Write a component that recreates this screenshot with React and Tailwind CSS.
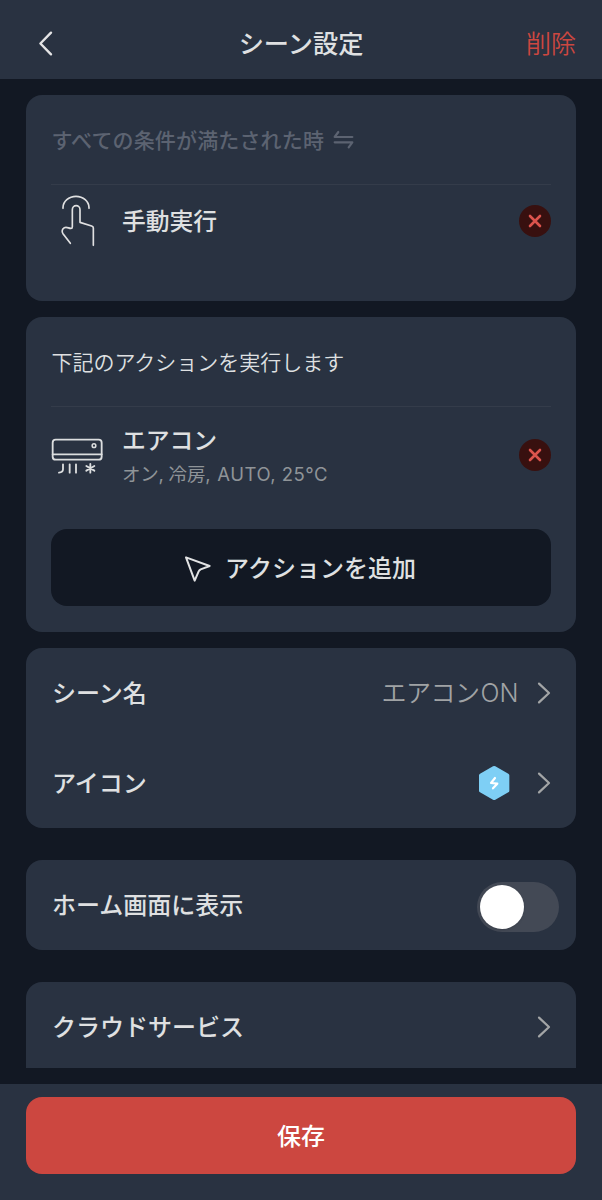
import React from 'react';

const BackIcon = () => (
  <svg width="20" height="30" viewBox="0 0 20 30" fill="none" stroke="#e4e4e5" strokeWidth="2.4" strokeLinecap="round" strokeLinejoin="round">
    <path d="M14 3.7 3.4 14.5 14 25.3" />
  </svg>
);

const ChevronIcon = () => (
  <svg width="14" height="22" viewBox="0 0 14 22" fill="none" stroke="#a3a5a6" strokeWidth="2.2" strokeLinecap="round" strokeLinejoin="round">
    <path d="M2 1.6 12 11 2 20.4" />
  </svg>
);

const SwapIcon = () => (
  <svg width="21" height="19" viewBox="0 0 63 57" fill="none" stroke="#5c6371" strokeWidth="6.5" strokeLinecap="round" strokeLinejoin="round">
    <path d="M58 21H5L16 6" />
    <path d="M5 37h53L47 52" />
  </svg>
);

const TapIcon = () => (
  <svg width="52" height="52" viewBox="93 315 156 156" fill="none" stroke="#e0e0e1" strokeWidth="5" strokeLinecap="round" strokeLinejoin="round">
    <path d="M129 355v-2a39 34 0 0 1 78 0v2" />
    <path d="M151 460 129 431c-5-7-2-15 4-18 8-4 14 3 20 2 3 0 4-2 4-5v-51a11.5 12 0 0 1 23 0v38l35 11c3 1 5 3 5 6v52" />
  </svg>
);

const AirConIcon = () => (
  <svg width="52" height="36" viewBox="93 386 156 108" fill="none" stroke="#dcdedf" strokeWidth="5.5" strokeLinecap="round" strokeLinejoin="round">
    <rect x="98" y="391" width="147" height="60" rx="9" />
    <path d="M98 435h147" />
    <circle cx="222" cy="409" r="5.5" strokeWidth="4.5" />
    <path d="M129 465v15q0 9-12 10M149 465v25M168 465v25" />
    <path d="M211 464v26M199 470l24 14M199 484l24-14" />
  </svg>
);

const CursorIcon = () => (
  <svg width="28" height="28" viewBox="493 106 84 84" fill="none" stroke="#e2e3e4" strokeWidth="6" strokeLinejoin="round">
    <path d="M499 113 570 139 543 149Q539 151 537 155L525 183Z" />
  </svg>
);

const HexIcon = () => (
  <svg width="32" height="36" viewBox="325 375 96 108">
    <path d="M370 379q3.500-2 7 0l39 22q3 2 3 5v46q0 3-3 5l-39 22q-3.500 2-7 0l-39-22q-3-2-3-5v-46q0-3 3-5z" fill="#7ecff5" />
    <path d="M376 414 364 429 383 431 370 445" fill="none" stroke="#fff" strokeWidth="6.5" strokeLinecap="round" strokeLinejoin="round" />
  </svg>
);

const RemoveButton = () => (
  <button className="flex size-8 shrink-0 items-center justify-center rounded-full bg-[#38100f]">
    <svg width="14" height="14" viewBox="0 0 14 14" stroke="#dc544d" strokeWidth="2.6" strokeLinecap="round">
      <path d="M2 2l10 10M12 2 2 12" />
    </svg>
  </button>
);

const Card = ({ className, children }) => (
  <section className={`mx-[26px] bg-[#293241] ${className}`}>{children}</section>
);

const SettingRow = ({ label, children }) => (
  <div className="flex h-[90px] items-center pr-[25.5px] pl-[26px]">
    <span className="flex-1 pt-0.5 text-[24px] leading-9 font-medium">{label}</span>
    {children}
  </div>
);

const App = () => {
  return (
    <div
      lang="ja"
      className="flex h-[1200px] w-[602px] flex-col overflow-hidden bg-[#121823] font-['Inter','Noto_Sans_CJK_JP',sans-serif] whitespace-nowrap text-[#dfe0e1]"
    >
      <header className="grid h-[79px] shrink-0 grid-cols-3 items-center bg-[#293241] pt-2 pr-[26px] pl-[37px]">
        <button className="justify-self-start">
          <BackIcon />
        </button>
        <h1 className="-ml-[11px] pt-px text-center text-[25.2px] leading-9 font-medium">シーン設定</h1>
        <button className="justify-self-end text-[25px] leading-9 font-[350] text-[#cc4740]">削除</button>
      </header>

      <main className="flex-1">
        {/* 条件 */}
        <Card className="mt-4 h-[206px] rounded-2xl px-[25.4px]">
          <div className="flex h-[90px] items-center gap-[9px] border-b border-[#343c4a] text-[21px] font-medium text-[#5c6371]">
            <span className="pt-0.5 tracking-[0.15px]">すべての条件が満たされた時</span>
            <SwapIcon />
          </div>
          <div className="flex h-[71px] items-center">
            <TapIcon />
            <span className="ml-[18.5px] flex-1 pt-[3px] text-[23.8px] leading-9 font-medium">手動実行</span>
            <RemoveButton />
          </div>
        </Card>

        {/* アクション */}
        <Card className="mt-4 h-[315px] rounded-2xl px-[25.4px]">
          <div className="flex h-[90px] items-center border-b border-[#343c4a] pt-0.5 text-[21px] font-[350]">
            下記のアクションを実行します
          </div>
          <div className="flex h-24 items-center">
            <div className="pt-0.5">
              <AirConIcon />
            </div>
            <div className="ml-[18.5px] flex-1 pt-[3px]">
              <div className="text-[23.8px] leading-9 font-medium">エアコン</div>
              <div className="-mt-px text-[18.5px] leading-8 text-[#8f9498]">
                <span className="tracking-[-0.2px]">オン, 冷房, </span>
                <span className="ml-0.5 tracking-[0.5px]">AUTO, 25°C</span>
              </div>
            </div>
            <RemoveButton />
          </div>
          <button className="mt-[26px] flex h-[77px] w-full items-center justify-center gap-[13px] rounded-2xl bg-[#121823] pr-0.5 text-[24px] font-medium">
            <span className="pt-0.5">
              <CursorIcon />
            </span>
            <span className="pt-0.5">アクションを追加</span>
          </button>
        </Card>

        <Card className="mt-4 h-[180px] rounded-2xl">
          <SettingRow label="シーン名">
            <span className="mr-[18px] text-[25px] leading-9 font-[350] text-[#a0a3a5]">
              <span className="tracking-[-0.5px]">エアコン</span>
              <span className="ml-px">ON</span>
            </span>
            <ChevronIcon />
          </SettingRow>
          <SettingRow label="アイコン">
            <span className="mr-[26.5px]">
              <HexIcon />
            </span>
            <ChevronIcon />
          </SettingRow>
        </Card>

        <Card className="mt-8 h-[90px] rounded-2xl">
          <div className="flex h-full items-center pr-[17.5px] pl-[26px]">
            <span className="flex-1 pt-0.5 text-[24px] leading-9 font-medium">ホーム画面に表示</span>
            <div className="mt-1 flex h-[50px] w-[82px] items-center rounded-full bg-[#434955] pl-[3px]">
              <div className="size-11 rounded-full bg-white shadow" />
            </div>
          </div>
        </Card>

        <Card className="mt-8 h-[86px] rounded-t-2xl">
          <SettingRow label="クラウドサービス">
            <ChevronIcon />
          </SettingRow>
        </Card>
      </main>

      <footer className="h-[116px] shrink-0 bg-[#293241] px-[26px] pt-[13px]">
        <button className="h-[77px] w-full rounded-2xl bg-[#cc4740] pt-0.5 text-[24px] font-medium text-white">保存</button>
      </footer>
    </div>
  );
};

export default App;
